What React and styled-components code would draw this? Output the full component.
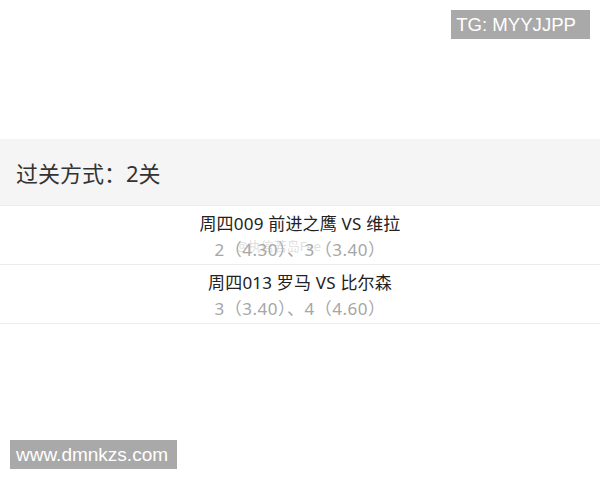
import React from "react";
import styled, { createGlobalStyle } from "styled-components";

const GlobalStyle = createGlobalStyle`
  html, body {
    margin: 0;
    padding: 0;
    background: #fff;
  }
  body {
    font-family: "Noto Sans", "Noto Sans CJK SC", sans-serif;
  }
`;

const Page = styled.div`
  position: relative;
  width: 600px;
  height: 480px;
  overflow: hidden;
  background: #fff;
  padding-top: 139px;
  box-sizing: border-box;
`;

const Badge = styled.div`
  position: absolute;
  ${(p) => (p.$top ? "top: 10px; right: 10px;" : "bottom: 11px; left: 10px;")}
  height: 29px;
  padding: ${(p) => (p.$top ? "0 14px 0 5px" : "0 9px 0 6px")};
  background: #a9a9a9;
  color: #fff;
  font-family: "Liberation Sans", Arial, sans-serif;
  font-size: ${(p) => (p.$top ? "18.6px" : "19px")};
  line-height: 29px;
`;

const ModeBar = styled.div`
  height: 67px;
  box-sizing: border-box;
  background: #f5f5f5;
  border-bottom: 1px solid #ececec;
  display: flex;
  align-items: center;
  padding-left: 16px;
  font-size: 22px;
  color: #333;
`;

const MatchList = styled.div`
  display: flex;
  flex-direction: column;
`;

const MatchRow = styled.div`
  position: relative;
  height: 59px;
  box-sizing: border-box;
  border-bottom: 1px solid #ececec;
  display: flex;
  flex-direction: column;
  align-items: center;
  justify-content: center;
  gap: 2px;
  padding-top: 4px;
`;

const MatchTitle = styled.div`
  font-size: 17px;
  line-height: 24px;
  color: #222;
  letter-spacing: 0.2px;
`;

const MatchPick = styled.div`
  font-size: 17px;
  line-height: 24px;
  color: #a6a6a6;
  letter-spacing: 0.5px;
`;

const Watermark = styled.div`
  position: absolute;
  left: 236px;
  top: 30px;
  font-size: 13px;
  color: rgba(170, 170, 170, 0.4);
  white-space: nowrap;
`;

const matches = [
  { title: "周四009 前进之鹰 VS 维拉", pick: "2（4.30）、3（3.40）", mark: true },
  { title: "周四013 罗马 VS 比尔森", pick: "3（3.40）、4（4.60）" },
];

export default function App() {
  return (
    <Page>
      <GlobalStyle />
      <ModeBar>过关方式：2关</ModeBar>
      <MatchList>
        {matches.map((m) => (
          <MatchRow key={m.title}>
            <MatchTitle>{m.title}</MatchTitle>
            <MatchPick>{m.pick}</MatchPick>
            {m.mark && <Watermark>@执信若岛Fee</Watermark>}
          </MatchRow>
        ))}
      </MatchList>
      <Badge $top>TG: MYYJJPP</Badge>
      <Badge>www.dmnkzs.com</Badge>
    </Page>
  );
}
